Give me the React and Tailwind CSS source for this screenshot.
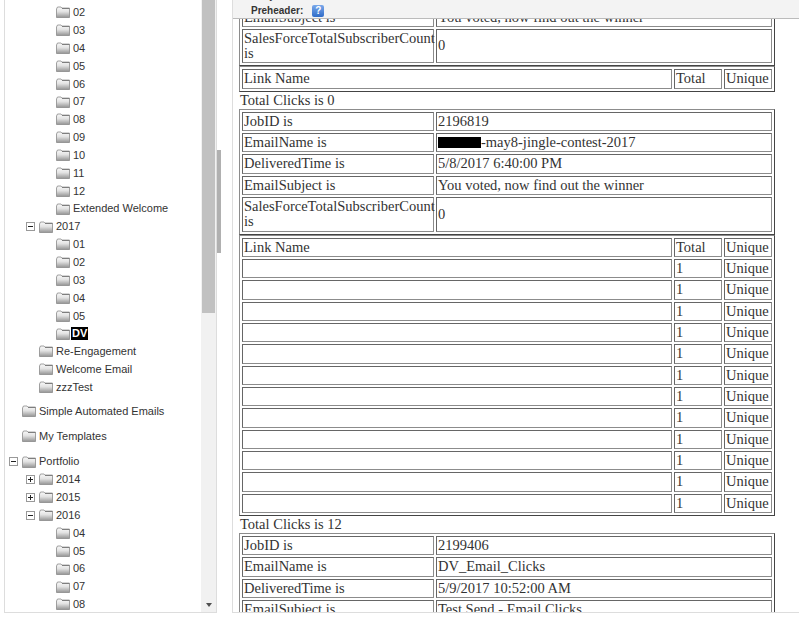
import React from "react";

const sans = { fontFamily: '"Liberation Sans", Arial, sans-serif' };

// grey folder from the tree
const Folder = () => (
  <svg width="14" height="12" viewBox="0 0 14 12" className="shrink-0">
    <defs>
      <linearGradient id="fold" x1="0" y1="0" x2="0" y2="1">
        <stop offset="0" stopColor="#fafafa" />
        <stop offset="0.45" stopColor="#e2e2e2" />
        <stop offset="1" stopColor="#949494" />
      </linearGradient>
    </defs>
    <path d="M0.5 3 L1.5 1 H5 L6 2.2 H13.5 V11.5 H0.5 Z" fill="url(#fold)" stroke="#8a8a8a" strokeWidth="0.8" />
    <path d="M6 2.4 H13.4" stroke="#666" strokeWidth="0.8" />
  </svg>
);

const Toggle = ({ open }) => (
  <svg width="9" height="9" viewBox="0 0 9 9" className="shrink-0">
    <rect x="0.5" y="0.5" width="8" height="8" fill="#fff" stroke="#999" />
    <path d="M2 4.5 H7" stroke="#222" />
    {!open && <path d="M4.5 2 V7" stroke="#222" />}
  </svg>
);

const Row = ({ label, level, toggle, selected, className = "h-[17.85px]" }) => (
  <div className={`flex items-center ${className}`}>
    <div className={level === 1 ? "w-[17px] shrink-0 pl-[4px]" : level === 2 ? "w-[34px] shrink-0 pl-[21px]" : "w-[51px] shrink-0"}>
      {toggle && <Toggle open={toggle === "open"} />}
    </div>
    <Folder />
    <span className={selected ? "ml-[1px] bg-black px-[1px] font-bold text-white leading-[13px]" : "ml-[3px] text-[#333]"}>{label}</span>
  </div>
);

const month = (l) => ({ label: l, level: 3 });

const tree = [
  ...["02", "03", "04", "05", "06", "07", "08", "09", "10", "11", "12", "Extended Welcome"].map(month),
  { label: "2017", level: 2, toggle: "open" },
  ...["01", "02", "03", "04", "05"].map(month),
  { label: "DV", level: 3, selected: true },
  { label: "Re-Engagement", level: 2 },
  { label: "Welcome Email", level: 2 },
  { label: "zzzTest", level: 2 },
];

const Cell = ({ children, colSpan }) => (
  <td colSpan={colSpan} className="overflow-visible border border-t-[#666] border-l-[#666] border-b-[#8c8c8c] border-r-[#8c8c8c] p-[1px] align-middle whitespace-nowrap">
    {children}
  </td>
);

const Table = ({ children }) => (
  <table className="w-[536px] table-fixed border-separate border-spacing-[2px] border border-t-[#8c8c8c] border-l-[#8c8c8c] border-b-[#444] border-r-[#444]">
    <colgroup>
      <col className="w-[192px]" />
      <col className="w-[236px]" />
      <col className="w-[48px]" />
      <col className="w-[48px]" />
    </colgroup>
    <tbody>{children}</tbody>
  </table>
);

const Info = ({ rows, count }) => (
  <Table>
    {rows.map(([k, v]) => (
      <tr key={k}>
        <Cell>{k}</Cell>
        <Cell colSpan={3}>{v}</Cell>
      </tr>
    ))}
    {count && (
      <tr>
        <Cell>
          SalesForceTotalSubscriberCount
          <br />
          is
        </Cell>
        <Cell colSpan={3}>0</Cell>
      </tr>
    )}
  </Table>
);

const Links = ({ count }) => (
  <Table>
    <tr>
      <Cell colSpan={2}>Link Name</Cell>
      <Cell>Total</Cell>
      <Cell>Unique</Cell>
    </tr>
    {Array.from({ length: count }).map((_, i) => (
      <tr key={i}>
        <Cell colSpan={2}>&nbsp;</Cell>
        <Cell>1</Cell>
        <Cell>Unique</Cell>
      </tr>
    ))}
  </Table>
);

const Total = ({ children }) => <div className="h-[17px] pl-[1px] leading-[17px]">{children}</div>;

export default function App() {
  return (
    <div className="flex h-[617px] w-[799px] overflow-hidden bg-white pb-[4px] pl-[4px]" style={sans}>
      {/* Left tree */}
      <div className="flex h-full w-[213px] shrink-0 border border-t-0 border-[#ddd] text-[11px]">
        <div className="min-w-0 flex-1 overflow-hidden pt-[3.5px]">
          {tree.map((n, i) => (
            <Row key={i} {...n} />
          ))}
          <Row label="Simple Automated Emails" level={1} className="mt-[6px] h-[18px]" />
          <Row label="My Templates" level={1} className="mt-[7px] h-[18px]" />
          <Row label="Portfolio" level={1} toggle="open" className="mt-[7.5px] h-[18px]" />
          <Row label="2014" level={2} toggle="closed" />
          <Row label="2015" level={2} toggle="closed" />
          <Row label="2016" level={2} toggle="open" />
          {["04", "05", "06", "07", "08"].map((m) => (
            <Row key={m} {...month(m)} />
          ))}
        </div>
        <div className="flex w-[15px] shrink-0 flex-col bg-[#f1f1f1]">
          <div className="mr-[1px] ml-[1px] h-[313px] bg-[#c1c1c1]" />
          <div className="flex flex-1 items-end justify-center pb-[5px]">
            <div className="h-0 w-0 border-x-[3px] border-t-[4px] border-x-transparent border-t-[#505050]" />
          </div>
        </div>
      </div>

      {/* Splitter */}
      <div className="flex w-[15px] shrink-0 flex-col">
        <div className="mt-[150px] h-[103px] w-[4px] bg-[#b0b0b0]" />
      </div>

      {/* Right pane */}
      <div className="flex h-full min-w-0 flex-1 flex-col border-b border-l border-[#ddd]">
        <div className="flex h-[19px] shrink-0 flex-col justify-end overflow-hidden border-b border-[#bbb] bg-[#f3f3f3] pb-[1px] pl-[18px] text-[10px] font-bold text-[#333]">
          <div className="mb-[2px] shrink-0 leading-[13px]">Subject:</div>
          <div className="flex shrink-0 items-center leading-[13px]">
            Preheader:
            <span className="ml-[9px] flex h-[12px] w-[12px] items-center justify-center rounded-[2px] bg-gradient-to-b from-[#7aa8ea] to-[#2f6cc8] text-[10px] text-white">?</span>
          </div>
        </div>
        <div className="h-0 flex-1 overflow-hidden pl-[6px] text-[14.5px] leading-[15.33px] text-[#333]" style={{ fontFamily: '"Liberation Serif", "Times New Roman", serif' }}>
          <div className="-mt-[14.5px]">
            <Info rows={[["EmailSubject is", "You voted, now find out the winner"]]} count />
            <Links count={0} />
            <Total>Total Clicks is 0</Total>
            <Info
              rows={[
                ["JobID is", "2196819"],
                ["EmailName is", <><span className="inline-block h-[11px] w-[43px] translate-y-[1px] bg-black" />-may8-jingle-contest-2017</>],
                ["DeliveredTime is", "5/8/2017 6:40:00 PM"],
                ["EmailSubject is", "You voted, now find out the winner"],
              ]}
              count
            />
            <Links count={12} />
            <Total>Total Clicks is 12</Total>
            <Info
              rows={[
                ["JobID is", "2199406"],
                ["EmailName is", "DV_Email_Clicks"],
                ["DeliveredTime is", "5/9/2017 10:52:00 AM"],
                ["EmailSubject is", "Test Send - Email Clicks"],
              ]}
            />
          </div>
        </div>
      </div>
    </div>
  );
}
